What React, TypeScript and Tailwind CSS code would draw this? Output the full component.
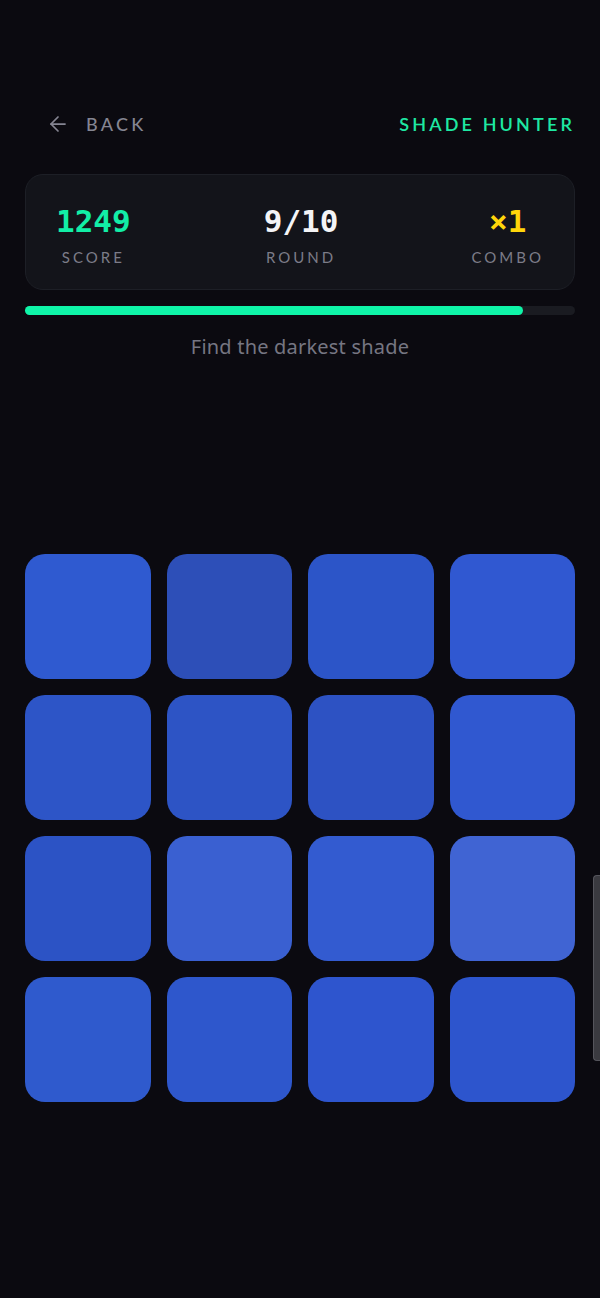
import { ArrowLeft } from "lucide-react";

const tiles = [
  "bg-[#2f5ad0]", "bg-[#2d4fb8]", "bg-[#2c55c8]", "bg-[#3058d1]",
  "bg-[#2d55c7]", "bg-[#2d54c5]", "bg-[#2d52c3]", "bg-[#3058d0]",
  "bg-[#2c53c5]", "bg-[#3a60d1]", "bg-[#335bd0]", "bg-[#4064d3]",
  "bg-[#2f5acd]", "bg-[#2e57cc]", "bg-[#2e55ce]", "bg-[#2d55cd]",
];

function Stat({ value, label, color }: { value: string; label: string; color: string }) {
  return (
    <div className="flex flex-col items-center">
      <span className={`font-['DejaVu_Sans_Mono',monospace] text-[31px] font-bold leading-none ${color}`}>
        {value}
      </span>
      <span className="mt-[13px] text-[15px] leading-none tracking-[0.2em] text-[#7c7c88]">{label}</span>
    </div>
  );
}

export default function App() {
  return (
    <main className="relative min-h-[1298px] bg-[#0b0a10] px-[25px] font-['Lato','Noto_Sans',sans-serif] text-white">
      <div className="flex items-center justify-between pt-[112px]">
        <button className="flex items-center gap-[16px] pl-[21px] text-[18px] font-medium leading-6 tracking-[0.18em] text-[#858592]">
          <ArrowLeft size={24} strokeWidth={1.75} />
          BACK
        </button>
        <span className="text-[18px] font-semibold leading-6 tracking-[0.175em] text-[#1ee8a2]">SHADE HUNTER</span>
      </div>

      <section className="mt-[38px] flex h-[116px] items-center justify-between rounded-[18px] border border-[#1d1f26] bg-[#13141a] px-[30px] pt-[7px]">
        <Stat value="1249" label="SCORE" color="text-[#12eea6]" />
        <Stat value="9/10" label="ROUND" color="text-[#f4f4f6]" />
        <Stat value="×1" label="COMBO" color="text-[#ffd60a]" />
      </section>

      <div className="mt-[16px] h-[9px] w-full rounded-full bg-[#1a1b21]">
        <div className="h-full w-[90.5%] rounded-full bg-[#0ff5a8]" />
      </div>

      <p className="mt-[20px] text-center font-['Noto_Sans',sans-serif] text-[20px] leading-6 tracking-[0.01em] text-[#767682]">
        Find the darkest shade
      </p>

      <div className="mt-[195px] grid grid-cols-4 gap-x-[16px] gap-y-[16px]">
        {tiles.map((c, i) => (
          <div key={i} className={`h-[125px] rounded-[20px] ${c}`} />
        ))}
      </div>

      <div className="absolute right-0 top-[875px] h-[186px] w-[7px] rounded-l-[4px] border border-r-0 border-[#55555c] bg-[#3a3a40]" />
    </main>
  );
}
